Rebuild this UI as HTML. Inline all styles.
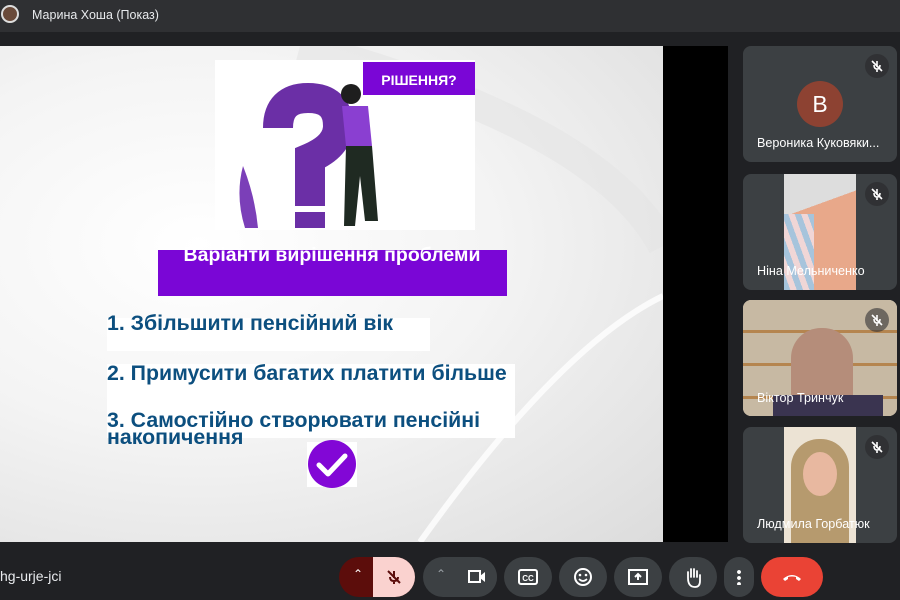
<!DOCTYPE html>
<html><head><meta charset="utf-8"><style>
*{margin:0;padding:0;box-sizing:border-box}
body{width:900px;height:600px;background:#202124;font-family:"Liberation Sans",sans-serif;position:relative;overflow:hidden;color:#fff}
.top{position:absolute;left:0;top:0;width:900px;height:32px;background:#2f3033}
.av{position:absolute;left:1px;top:5px;width:18px;height:18px;border-radius:50%;background:#6a4a3a;border:2px solid #ddd}
.top span{position:absolute;left:32px;top:8px;font-size:12.5px;color:#e8eaed}
.slide{position:absolute;left:0;top:46px;width:663px;height:496px;background:radial-gradient(ellipse at 30% 40%,#fff 0%,#f4f4f4 45%,#dcdcdc 100%);overflow:hidden}
.blk{position:absolute;left:663px;top:46px;width:65px;height:496px;background:#000}
.tile{position:absolute;left:743px;width:154px;height:116px;background:#3c4043;border-radius:8px;overflow:hidden}
.name{position:absolute;left:14px;bottom:12px;font-size:12.6px;color:#fff;white-space:nowrap}
.mic{position:absolute;right:8px;top:8px;width:24px;height:24px;border-radius:50%;background:#303134}
.mic svg{position:absolute;left:5px;top:5px}
.btn{position:absolute;top:557px;height:40px;border-radius:20px;background:#3c4043}
.t{position:absolute;color:#0c4f7f;font-weight:bold;font-size:21.3px;left:107px;white-space:nowrap}
</style></head><body>
<div class="top"><div class="av"></div><span>Марина Хоша (Показ)</span></div>
<div class="slide">
<svg width="663" height="496" style="position:absolute;left:0;top:0">
<path d="M420 496 Q560 300 663 250" stroke="#fff" stroke-width="6" fill="none" opacity=".8"/>
<path d="M300 0 Q600 80 663 200" stroke="#e5e5e5" stroke-width="30" fill="none" opacity=".6"/>
<rect x="215" y="14" width="260" height="170" fill="#fff"/>
<path d="M278 82 Q278 52 308 52 Q338 52 338 80 Q338 100 310 112 L310 160" stroke="#6b2fa6" stroke-width="30" fill="none"/>
<rect x="295" y="166" width="30" height="16" fill="#6b2fa6"/>
<path d="M245 182 Q235 150 243 120 Q255 150 258 182Z" fill="#7b3fb8"/>
<rect x="363" y="16" width="112" height="33" fill="#7a06d6"/>
<text x="419" y="39" font-size="14" font-weight="bold" fill="#fff" text-anchor="middle" font-family="Liberation Sans Narrow,Liberation Sans,sans-serif">РІШЕННЯ?</text>
<circle cx="351" cy="48" r="10" fill="#1e1e1e"/>
<path d="M342 60 L368 60 L372 100 L346 100Z" fill="#8a3fd1"/>
<path d="M346 100 L372 100 L378 175 L365 175 L360 130 L355 180 L344 180Z" fill="#1f2a22"/>
<rect x="158" y="204" width="349" height="46" fill="#7a06d6"/>
<text x="332" y="215" font-size="19.5" font-weight="bold" fill="#fff" text-anchor="middle">Варіанти вирішення проблеми</text>
<rect x="107" y="272" width="323" height="33" fill="#fff"/>
<rect x="107" y="318" width="408" height="74" fill="#fff"/>
<rect x="307" y="396" width="50" height="45" fill="#fff"/>
<circle cx="332" cy="418" r="24" fill="#8207d6"/>
<path d="M319 419 L328 428 L345 410" stroke="#fff" stroke-width="5" fill="none" stroke-linecap="round" stroke-linejoin="round"/>
</svg>
<div class="t" style="top:265px">1. Збільшити пенсійний вік</div>
<div class="t" style="top:315px">2. Примусити багатих платити більше</div>
<div class="t" style="top:362px">3. Самостійно створювати пенсійні</div>
<div class="t" style="top:381px;line-height:1">накопичення</div>
</div>
<div class="blk"></div>
<div class="tile" style="top:46px"><div style="position:absolute;left:54px;top:35px;width:46px;height:46px;border-radius:50%;background:#8d4232;font-size:23px;text-align:center;line-height:46px">B</div><div class="mic"><svg width="14" height="14"><path d="M7 2v6M4 6q0 4 3 4t3-4M7 10v3M2 2l10 10" stroke="#fff" stroke-width="1.6" fill="none"/></svg></div><div class="name">Вероника Куковяки...</div></div>
<div class="tile" style="top:174px"><div style="position:absolute;left:41px;top:0;width:72px;height:116px;background:linear-gradient(160deg,#ddd 0 30%,#e8a88a 30% 100%)"></div><div style="position:absolute;left:41px;top:40px;width:30px;height:76px;background:repeating-linear-gradient(70deg,#a6c4dc 0 6px,#f0d6d6 6px 12px)"></div><div class="mic"><svg width="14" height="14"><path d="M7 2v6M4 6q0 4 3 4t3-4M7 10v3M2 2l10 10" stroke="#fff" stroke-width="1.6" fill="none"/></svg></div><div class="name">Ніна Мельниченко</div></div>
<div class="tile" style="top:300px;background:#d8cbb8"><div style="position:absolute;left:0;top:0;width:154px;height:116px;background:repeating-linear-gradient(180deg,#c7b9a3 0 30px,#b5854f 30px 33px)"></div><div style="position:absolute;left:48px;top:28px;width:62px;height:88px;border-radius:30px 30px 10px 10px;background:#b58d7a"></div><div style="position:absolute;left:30px;top:95px;width:110px;height:21px;background:#3a3450"></div><div class="mic" style="background:rgba(48,49,52,.6)"><svg width="14" height="14"><path d="M7 2v6M4 6q0 4 3 4t3-4M7 10v3M2 2l10 10" stroke="#fff" stroke-width="1.6" fill="none"/></svg></div><div class="name" style="bottom:11px">Віктор Тринчук</div></div>
<div class="tile" style="top:427px"><div style="position:absolute;left:41px;top:0;width:72px;height:116px;background:#ece3d4"></div><div style="position:absolute;left:48px;top:12px;width:58px;height:104px;border-radius:28px 28px 0 0;background:#b69a6e"></div><div style="position:absolute;left:60px;top:25px;width:34px;height:44px;border-radius:50%;background:#e8b8a0"></div><div class="mic"><svg width="14" height="14"><path d="M7 2v6M4 6q0 4 3 4t3-4M7 10v3M2 2l10 10" stroke="#fff" stroke-width="1.6" fill="none"/></svg></div><div class="name">Людмила Горбатюк</div></div>
<div style="position:absolute;left:0;top:568px;font-size:14px;color:#e8eaed">hg-urje-jci</div>
<div class="btn" style="left:339px;width:76px;background:#5c0d0b"></div>
<div class="btn" style="left:373px;width:42px;background:#fad2cf;border-radius:0 20px 20px 0"></div>
<div style="position:absolute;left:353px;top:567px;font-size:12px;color:#fff">⌃</div>
<svg style="position:absolute;left:385px;top:568px" width="18" height="18"><path d="M9 3v7M5 9q0 4 4 4t4-4M9 13v3M3 3l12 12" stroke="#5c0d0b" stroke-width="2" fill="none"/></svg>
<div class="btn" style="left:423px;width:74px"></div>
<div class="btn" style="left:455px;width:42px;background:#3c4043"></div>
<div style="position:absolute;left:436px;top:567px;font-size:12px;color:#9aa0a6">⌃</div>
<svg style="position:absolute;left:467px;top:568px" width="20" height="18"><rect x="2" y="3" width="11" height="11" stroke="#fff" stroke-width="2" fill="none"/><path d="M13 8l5-4v10l-5-4z" fill="#fff"/></svg>
<div class="btn" style="left:504px;width:48px"></div>
<svg style="position:absolute;left:518px;top:569px" width="20" height="16"><rect x="1" y="1" width="18" height="14" rx="2" stroke="#fff" stroke-width="2" fill="none"/><text x="10" y="12" font-size="8" font-weight="bold" fill="#fff" text-anchor="middle">CC</text></svg>
<div class="btn" style="left:559px;width:48px"></div>
<svg style="position:absolute;left:573px;top:567px" width="20" height="20"><circle cx="10" cy="10" r="8" stroke="#fff" stroke-width="2" fill="none"/><circle cx="7" cy="8" r="1.3" fill="#fff"/><circle cx="13" cy="8" r="1.3" fill="#fff"/><path d="M6 12q4 4 8 0" stroke="#fff" stroke-width="1.6" fill="none"/></svg>
<div class="btn" style="left:614px;width:48px"></div>
<svg style="position:absolute;left:628px;top:569px" width="20" height="16"><rect x="1" y="1" width="18" height="14" stroke="#fff" stroke-width="2" fill="none"/><path d="M10 11V5M7 8l3-3 3 3" stroke="#fff" stroke-width="2" fill="none"/></svg>
<div class="btn" style="left:669px;width:48px"></div>
<svg style="position:absolute;left:684px;top:566px" width="18" height="22"><path d="M4 12V6M7 11V3M10 11V3M13 11V5M4 12q0 9 7 9q5 0 5-6V9" stroke="#fff" stroke-width="1.8" fill="none" stroke-linecap="round"/></svg>
<div class="btn" style="left:724px;width:30px"></div>
<div style="position:absolute;left:737px;top:569px;width:4px;height:16px;background:radial-gradient(circle,#fff 1.8px,transparent 2px) 0 0/4px 6px"></div>
<div class="btn" style="left:761px;width:62px;background:#ea4335"></div>
<svg style="position:absolute;left:781px;top:572px" width="22" height="10"><path d="M2 7q9-8 18 0l-2 2-3-2v-2q-4-1-8 0v2l-3 2z" fill="#fff"/></svg>
</body></html>
